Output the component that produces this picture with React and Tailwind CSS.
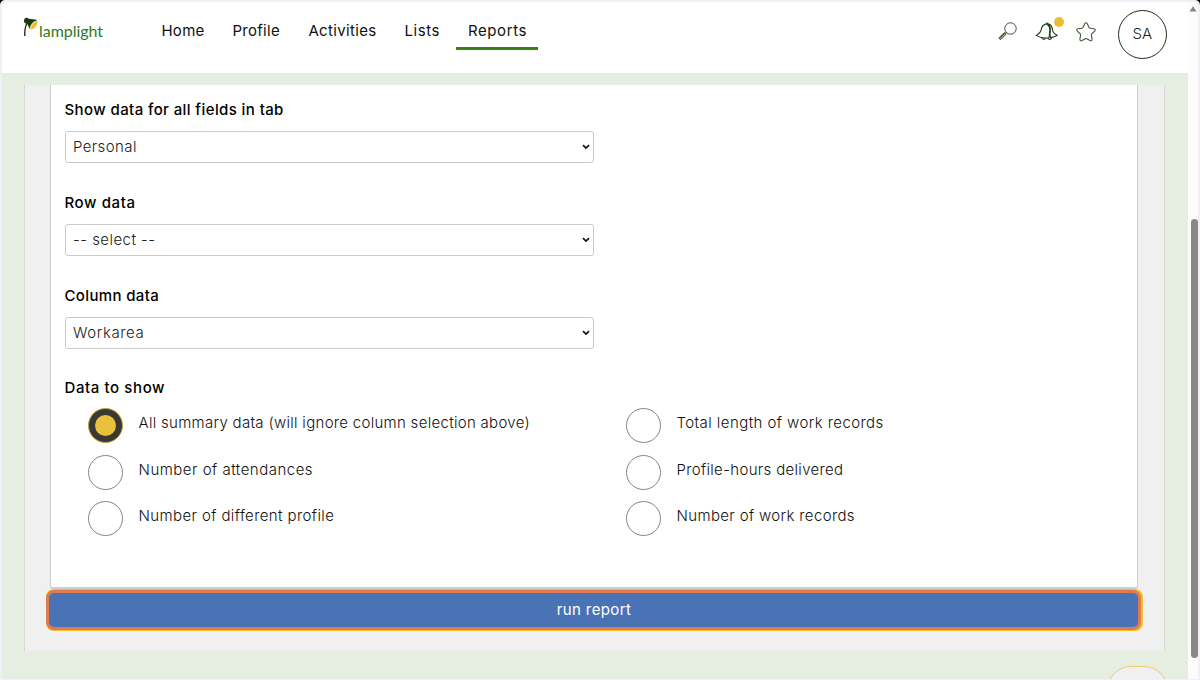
import React from "react";

function Logo() {
  return (
    <div className="flex h-7 w-[82px] items-start">
      <svg width="17" height="22" viewBox="0 0 17 22" className="-mr-[1px] shrink-0">
        <path d="M3.8 6.4 Q1.2 12 1.9 19" fill="none" stroke="#111d0c" strokeWidth="1.3" />
        <path d="M.9 3.6 Q1.2 .8 3.4 .7 Q4.8 .6 5.8 1.7 L13.4 2.7 Q14.6 3.4 13.2 4.4 L8 11.4 Q6.8 12.6 6.4 11.2 L4.3 7 Q.8 6.4 .9 3.6 Z" fill="#183c12" />
        <ellipse cx="10.7" cy="8.1" rx="5.3" ry="2.5" transform="rotate(-50 10.7 8.1)" fill="#efbd30" />
        <path d="M13.2 4 Q8.6 5.8 7.4 11.4" fill="none" stroke="#f4f7f2" strokeWidth=".6" />
      </svg>
      <span className="mt-[4px] text-[16px] leading-[20px] tracking-[-0.05px] text-[#34791a] font-['Lato',sans-serif]">lamplight</span>
    </div>
  );
}

function NavItem({ children, className }) {
  return <a className={`block whitespace-nowrap text-[15px] leading-5 text-[#111] ${className}`}>{children}</a>;
}

function Field({ label, value, labelClass, valueClass }) {
  return (
    <div className="h-[92.8px]">
      <div className={`mb-[11px] w-max text-[15px] leading-5 font-medium text-black ${labelClass}`}>{label}</div>
      <div className="flex h-8 w-[529.5px] items-center justify-between rounded-[3px] border-[1.5px] border-[#cbcbcb] bg-white pr-[3px] pl-[7.5px]">
        <span className={`text-[15px] leading-5 font-light text-[#222] ${valueClass}`}>{value}</span>
        <svg width="8" height="6" viewBox="0 0 8 6">
          <path d="M1 1.2 L4 4.1 L7 1.2" fill="none" stroke="#111" strokeWidth="1.7" />
        </svg>
      </div>
    </div>
  );
}

function Choice({ label, checked, className }) {
  return (
    <div className="flex h-[46.4px] items-start">
      {checked ? (
        <span className="flex size-[35px] shrink-0 items-center justify-center rounded-full border border-[#c99f26] bg-[#383838]">
          <span className="size-[21px] rounded-full bg-[#ebc03a]" />
        </span>
      ) : (
        <span className="size-[35px] shrink-0 rounded-full border border-[#858585] bg-white" />
      )}
      <span className={`mt-[5px] ml-4 text-[15px] leading-5 font-light whitespace-nowrap text-[#111] ${className}`}>{label}</span>
    </div>
  );
}

function SearchIcon() {
  return (
    <svg width="20" height="20" viewBox="0 0 20 20" fill="none" stroke="#3a4f31">
      <circle cx="12.5" cy="7.5" r="5.7" strokeWidth="1" />
      <path d="M8.5 11.4 L6.9 13" strokeWidth="1.3" />
      <path d="M6.3 11.5 L8 13.2 L3 18.4 Q1.3 18.5 1 16.8 Z" strokeWidth="1" fill="#a5b09f" />
      <path d="M2.2 16.8 L6.7 12.4" strokeWidth=".9" />
    </svg>
  );
}

function BellIcon() {
  return (
    <svg width="24" height="20" viewBox="0 0 24 20" fill="none" stroke="#1d3b12" strokeWidth="1.1" strokeLinejoin="round">
      <path d="M11.3 2.9 Q12 1.2 13 2.9 C16 3.7 17.3 6 17.6 9.2 C17.8 11.8 19.8 13 22.3 14.4 Q20 16 15.4 16.6" />
      <path d="M11.3 2.9 C7.6 3.8 6.4 6.4 6 9.3 C5.5 12 3.6 12.8 1.2 14.4 C4.5 16.5 10 17.3 14 16.8 Q14.5 12.5 15 9 Q15 4.8 11.3 2.9 Z" />
      <path d="M13 3.2 Q15.5 5.4 15.2 9.4 Q14.5 12.8 15.4 16.6" strokeWidth="1.3" />
      <path d="M6.6 16.7 Q8.6 19.7 10.5 17.2 M12.6 17.2 Q15.1 19.8 16.9 16.6" />
    </svg>
  );
}

function StarIcon() {
  return (
    <svg width="22" height="22" viewBox="0 0 22 22" fill="none" stroke="#42583a" strokeWidth="1.1" strokeLinejoin="round">
      <path d="M9.7 2.8 Q11 .8 12.3 2.8 L14 6.4 Q14.3 7.1 15.1 7.2 L18.8 7.7 Q21.2 8.2 19.7 10.1 L16.8 12.9 Q16.3 13.4 16.4 14.2 L17.1 18.1 Q17.2 20.4 15 19.6 L11.8 17.8 Q11 17.4 10.2 17.8 L7 19.6 Q4.8 20.4 4.9 18.1 L5.6 14.2 Q5.7 13.4 5.2 12.9 L2.3 10.1 Q.8 8.2 3.2 7.7 L6.9 7.2 Q7.7 7.1 8 6.4 Z" />
    </svg>
  );
}

export default function App() {
  return (
    <div className="h-[680px] w-[1200px] overflow-hidden bg-black font-['Inter',sans-serif]">
      <div className="h-full rounded-t-[5px] bg-[#f1f0f6] px-[2px] pt-[2px] pb-[1px]">
        <div className="flex h-full overflow-hidden rounded-t-[6px] bg-white">
          <div className="flex w-[1186px] flex-col">
            <header className="flex h-[71px] shrink-0 items-start bg-white pl-[21px]">
              <div className="mt-[15px]"><Logo /></div>
              <nav className="mt-[19px] ml-[56.4px] flex">
                <NavItem className="w-[71px] tracking-[0.3px]">Home</NavItem>
                <NavItem className="w-[76px] tracking-[0.3px]">Profile</NavItem>
                <NavItem className="w-[96px] tracking-[0.35px]">Activities</NavItem>
                <NavItem className="w-[52px] tracking-[0.6px]">Lists</NavItem>
                <NavItem className="h-[29px] w-[82px] border-b-[3px] border-[#37820f] pl-[11.5px] tracking-[0.6px]">Reports</NavItem>
              </nav>
              <div className="mt-[19px] ml-[460px] flex">
                <SearchIcon />
                <div className="relative ml-[17px]">
                  <BellIcon />
                  <span className="absolute -top-[4px] left-[19px] size-[10px] rounded-full bg-[#ebbd32]" />
                </div>
                <div className="ml-[15.5px]"><StarIcon /></div>
              </div>
              <div className="mt-[8px] ml-[21px] flex size-[49px] shrink-0 items-center justify-center rounded-full border-[1.5px] border-[#1b2f14] text-[15px] font-light text-[#222]">SA</div>
            </header>
            <main className="flex flex-1 flex-col bg-[#e6eee2] pt-[12px] pl-[22px]">
              <section className="h-[566px] w-[1141px] shrink-0 border-x border-[#d5d9d3] bg-[#f0f0f0] px-[21px]">
                <div className="ml-[4px] h-[504px] w-[1088px] rounded-b-[3px] border-x border-b-2 border-[#cecece] bg-white pt-[15px] pl-[13.5px]">
                  <Field label="Show data for all fields in tab" value="Personal" labelClass="tracking-[0.4px]" valueClass="tracking-[0.4px]" />
                  <Field label="Row data" value="-- select --" labelClass="tracking-[0.6px]" valueClass="tracking-[0.45px]" />
                  <Field label="Column data" value="Workarea" labelClass="tracking-[0.35px]" valueClass="tracking-[0.6px]" />
                  <div className="text-[15px] leading-5 font-medium tracking-[0.6px] text-black">Data to show</div>
                  <div className="mt-[10px] flex pl-[23px]">
                    <div className="w-[538px]">
                      <Choice checked label="All summary data (will ignore column selection above)" className="tracking-[0.3px]" />
                      <Choice label="Number of attendances" className="tracking-[0.5px]" />
                      <Choice label="Number of different profile" className="tracking-[0.4px]" />
                    </div>
                    <div>
                      <Choice label="Total length of work records" className="tracking-[0.43px]" />
                      <Choice label="Profile-hours delivered" className="tracking-[0.33px]" />
                      <Choice label="Number of work records" className="tracking-[0.36px]" />
                    </div>
                  </div>
                </div>
                <div className="h-[42px] w-[1097px] rounded-[8px] bg-[#ecc02d] pt-[1px] pr-[2px] pb-[1px]">
                  <button className="block h-[40px] w-full rounded-[8px] border-[3.5px] border-[#e17a4c] bg-[#4a73b5] pl-px text-[15px] leading-5 tracking-[0.4px] text-white">run report</button>
                </div>
              </section>
              <div className="mt-[15px] ml-[1083px] h-[13px] w-[61px] shrink-0 overflow-hidden">
                <div className="h-[60px] w-[61px] rounded-[24px] border-[1.5px] border-[#ebcc70] bg-[#f0f0f0]" />
              </div>
            </main>
          </div>
          <div className="flex w-[10px] flex-col items-center bg-[#fcfcfc] pt-[4px]">
            <svg width="8" height="6" viewBox="0 0 8 6" className="shrink-0">
              <path d="M4 .3 L7.5 5.5 H.5 Z" fill="#858585" />
            </svg>
            <div className="mt-[207px] ml-[3px] h-[439px] w-[7px] shrink-0 rounded-full bg-[#888]" />
          </div>
        </div>
      </div>
    </div>
  );
}
